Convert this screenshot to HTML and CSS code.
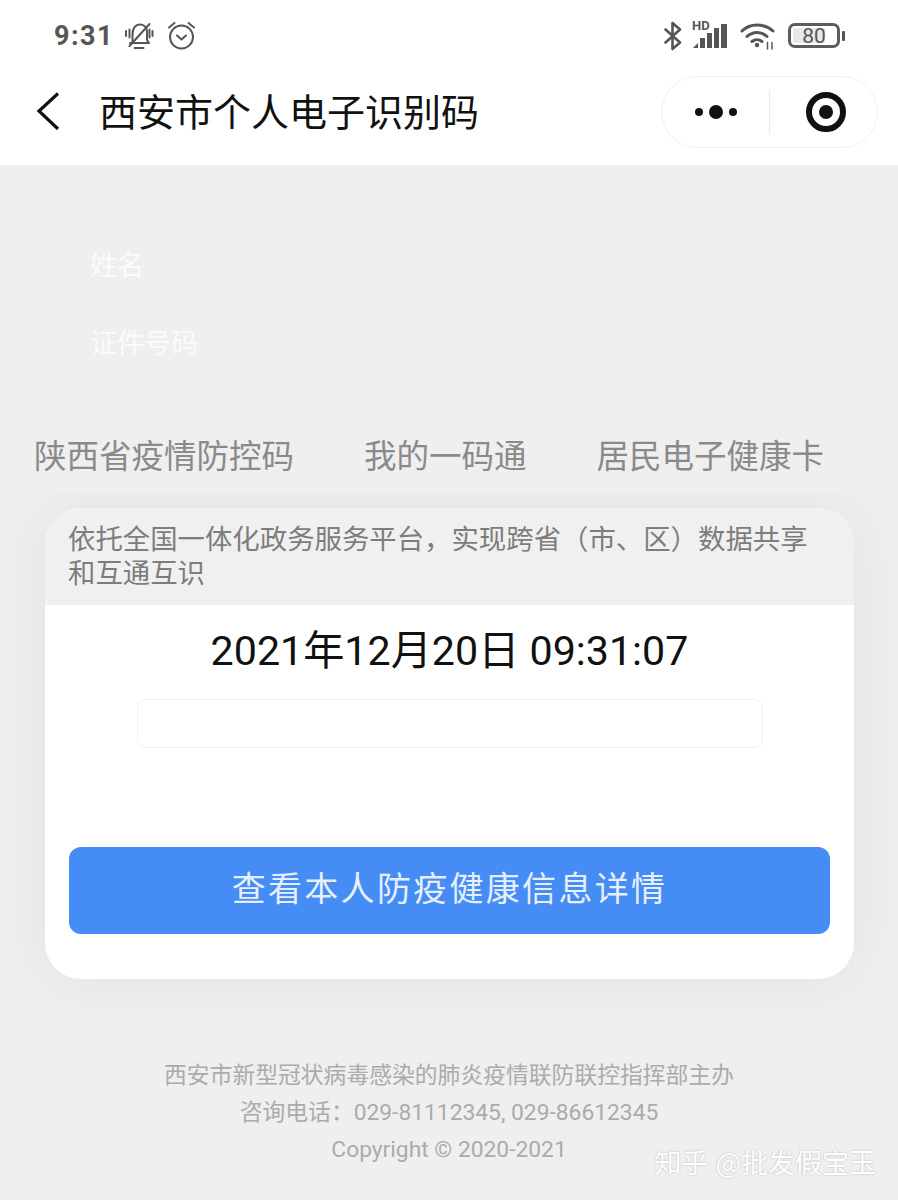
FILE: index.html
```html
<!DOCTYPE html>
<html lang="zh">
<head>
<meta charset="utf-8">
<title>西安市个人电子识别码</title>
<link rel="stylesheet" href="styles.css">
</head>
<body>
<div class="page">
  <header class="top">
    <div class="status">
      <div class="status-left">
        <span class="time">9:31</span>
        <svg class="ic-bell" width="30" height="28" viewBox="0 0 30 28" fill="none" stroke="#555" stroke-width="2" stroke-linecap="round" stroke-linejoin="round">
          <path d="M8.500 21V12c0-5.500 3-9.500 7.500-9.500 3.500 0 6.500 2.500 7 6.500v9l2 3H6"/>
          <path d="M10.500 26h9"/>
          <path d="M5.500 24 25.500 2"/>
          <path d="M2 9v5M5.500 7.500v8M25.500 7.500v8M28.500 9v5"/>
        </svg>
        <svg class="ic-alarm" width="30" height="30" viewBox="0 0 30 30" fill="none" stroke="#555" stroke-width="2" stroke-linecap="round" stroke-linejoin="round">
          <circle cx="14.500" cy="16" r="11.500"/>
          <path d="M10 14.500l4.500 4 4.500-4"/>
          <path d="M2 6.500 7.500 2M27 6.500 21.500 2"/>
        </svg>
      </div>
      <div class="status-right">
        <svg class="ic-bt" width="18" height="30" viewBox="0 0 18 30" fill="none" stroke="#555" stroke-width="2.600" stroke-linejoin="round" stroke-linecap="round">
          <path d="M1.500 8.500 16 21.500 8.500 28V2L16 8.500 1.500 21.500"/>
        </svg>
        <div class="signal">
          <span class="hd">HD</span>
          <svg width="34" height="26" viewBox="0 0 34 26" fill="#555">
            <path d="M0 25l5-5v5z"/>
            <rect x="7" y="15" width="5" height="10"/>
            <rect x="14" y="10" width="5" height="15"/>
            <rect x="21" y="5" width="5" height="20"/>
            <rect x="28" y="1" width="6" height="24"/>
          </svg>
        </div>
        <svg class="ic-wifi" width="36" height="28" viewBox="0 0 36 28" fill="none" stroke="#555" stroke-width="3" stroke-linecap="round">
          <path d="M2 9C10 1 24 1 33 9"/>
          <path d="M7 14.500c6-5.500 14-5.500 20 0"/>
          <path d="M12 19.500c3-2.500 7-2.500 10 0"/>
          <circle cx="17" cy="23" r="2.200" fill="#555" stroke="none"/>
          <path d="M27.500 20.500v6.500M32 20.500v6.500" stroke-width="1.500"/>
        </svg>
        <div class="battery">
          <div class="battery-body"><span class="battery-fill"></span><span class="battery-num">80</span></div>
          <span class="battery-cap"></span>
        </div>
      </div>
    </div>
    <nav class="nav">
      <div class="nav-left">
        <svg class="back" width="24" height="38" viewBox="0 0 24 38" fill="none" stroke="#111" stroke-width="3.200">
          <path d="M22 1.500 3 19l19 18"/>
        </svg>
        <h1 class="title">西安市个人电子识别码</h1>
      </div>
      <div class="capsule">
        <div class="dots"><i class="dot"></i><i class="dot big"></i><i class="dot"></i></div>
        <div class="cap-line"></div>
        <div class="target"><i></i></div>
      </div>
    </nav>
  </header>

  <main class="main">
    <section class="person">
      <p class="person-line">姓名</p>
      <p class="person-line">证件号码</p>
    </section>
    <div class="tabs">
      <span>陕西省疫情防控码</span>
      <span>我的一码通</span>
      <span>居民电子健康卡</span>
    </div>
    <section class="card">
      <div class="card-head">依托全国一体化政务服务平台，实现跨省（市、区）数据共享和互通互识</div>
      <div class="card-body">
        <div class="date">2021年12月20日 09:31:07</div>
        <div class="blank"></div>
        <button class="btn">查看本人防疫健康信息详情</button>
      </div>
    </section>
    <footer class="foot">
      <p>西安市新型冠状病毒感染的肺炎疫情联防联控指挥部主办</p>
      <p>咨询电话：029-81112345, 029-86612345</p>
      <p>Copyright © 2020-2021</p>
    </footer>
  </main>
  <div class="mark">知乎 @批发假宝玉</div>
</div>
</body>
</html>
```
FILE: styles.css
```css
* { box-sizing: border-box; }
html, body { margin: 0; padding: 0; }
body {
  width: 898px;
  height: 1200px;
  overflow: hidden;
  font-family: "Noto Sans CJK SC", Roboto, sans-serif;
  background: #efefef;
}
.page { position: relative; width: 898px; height: 1200px; display: flex; flex-direction: column; }
.top { background: #fff; height: 165px; flex: none; position: relative; z-index: 2; }
.status {
  height: 71px;
  padding: 0 53px 0 54px;
  display: flex;
  justify-content: space-between;
  align-items: center;
}
.status-left, .status-right { display: flex; align-items: center; }
.time {
  font-family: Roboto, sans-serif;
  font-weight: 700;
  font-size: 27px;
  letter-spacing: 1.500px;
  color: #555;
  margin-right: 10px;
}
.ic-alarm { margin-left: 13px; }
.signal { position: relative; width: 34px; height: 26px; margin-left: 11px; }
.signal svg { display: block; }
.hd {
  position: absolute;
  left: -1px;
  top: -4px;
  font-family: Roboto, sans-serif;
  font-weight: 700;
  font-size: 13px;
  line-height: 13px;
  color: #555;
}
.ic-wifi { margin-left: 13px; }
.battery { display: flex; align-items: center; gap: 2px; margin-left: 12px; }
.battery-body {
  position: relative;
  width: 52px;
  height: 25px;
  border: 3px solid #5c5c5c;
  border-radius: 7px;
  display: flex;
  align-items: center;
  justify-content: center;
  overflow: hidden;
}
.battery-fill { position: absolute; left: 2px; top: 2px; bottom: 2px; width: 32px; background: #e8e8e8; border-radius: 2px; }
.battery-num { position: relative; font-family: Roboto, sans-serif; font-size: 21px; line-height: 20px; color: #555; }
.battery-cap { width: 3px; height: 10px; background: #555; border-radius: 1px; }
.nav {
  height: 94px;
  padding: 5px 20px 0 36px;
  display: flex;
  align-items: flex-start;
  justify-content: space-between;
}
.nav-left { height: 72px; display: flex; align-items: center; gap: 39px; }
.back { display: block; margin-top: -2px; }
.title { margin: 0 0 4px; font-size: 38px; font-weight: 400; line-height: 50px; color: #111; }
.capsule {
  width: 217px;
  height: 72px;
  border: 1px solid #f0f0f0;
  border-radius: 36px;
  display: flex;
  align-items: center;
}
.dots { width: 107px; display: flex; justify-content: center; align-items: center; gap: 6px; }
.dot { width: 8px; height: 8px; border-radius: 50%; background: #111; }
.dot.big { width: 14px; height: 14px; }
.cap-line { width: 1px; height: 44px; background: #eaeaea; }
.target {
  width: 40px;
  height: 40px;
  margin-left: 36px;
  border: 6px solid #111;
  border-radius: 50%;
  display: flex;
  align-items: center;
  justify-content: center;
}
.target i { width: 14px; height: 14px; border-radius: 50%; background: #111; }
.main { flex: 1; display: flex; flex-direction: column; align-items: stretch; }
.person { padding: 80px 0 0 90px; height: 262px; }
.person-line { margin: 0 0 40px; font-size: 27px; line-height: 38px; color: #fbfbfb; }
.tabs {
  position: relative;
  z-index: 1;
  height: 66px;
  padding: 2px 0 0 34px;
  display: flex;
  gap: 70px;
  font-size: 32.500px;
  line-height: 50px;
  color: #8a8a8a;
  background: #efefef;
}
.card {
  margin: 15px 44px 0 45px;
  height: 471px;
  border-radius: 36px;
  background: #fff;
  overflow: hidden;
  box-shadow: 0 0 70px rgba(0, 0, 0, .06);
  flex: none;
}
.card-head {
  height: 97px;
  padding: 12px 24px 0 23px;
  background: #f0f0f0;
  font-size: 27.400px;
  line-height: 34px;
  color: #7d7d7d;
}
.card-body { padding: 18px 24px 0; display: flex; flex-direction: column; align-items: center; }
.date {
  font-family: Roboto, "Noto Sans CJK SC", sans-serif;
  font-size: 41.200px;
  line-height: 56px;
  color: #111;
  white-space: nowrap;
}
.blank {
  width: 626px;
  height: 49px;
  margin-top: 20px;
  border: 1px solid #f0f0f0;
  border-radius: 9px;
}
.btn {
  width: 100%;
  height: 87px;
  margin-top: 99px;
  padding: 0 0 8px;
  border: 0;
  border-radius: 12px;
  background: #458cf4;
  color: #e6effd;
  font-family: "Noto Sans CJK SC", sans-serif;
  font-size: 34px;
  letter-spacing: 2.300px;
}
.foot {
  padding-top: 78px;
  text-align: center;
  font-family: Roboto, "Noto Sans CJK SC", sans-serif;
  font-size: 22.800px;
  line-height: 37px;
  color: #ababab;
}
.foot p { margin: 0; }
.mark {
  position: absolute;
  right: 22px;
  top: 1143px;
  font-size: 27px;
  line-height: 38px;
  word-spacing: 1px;
  color: #fff;
  text-shadow: 0 0 2px rgba(0,0,0,.25);
  white-space: nowrap;
}
```
